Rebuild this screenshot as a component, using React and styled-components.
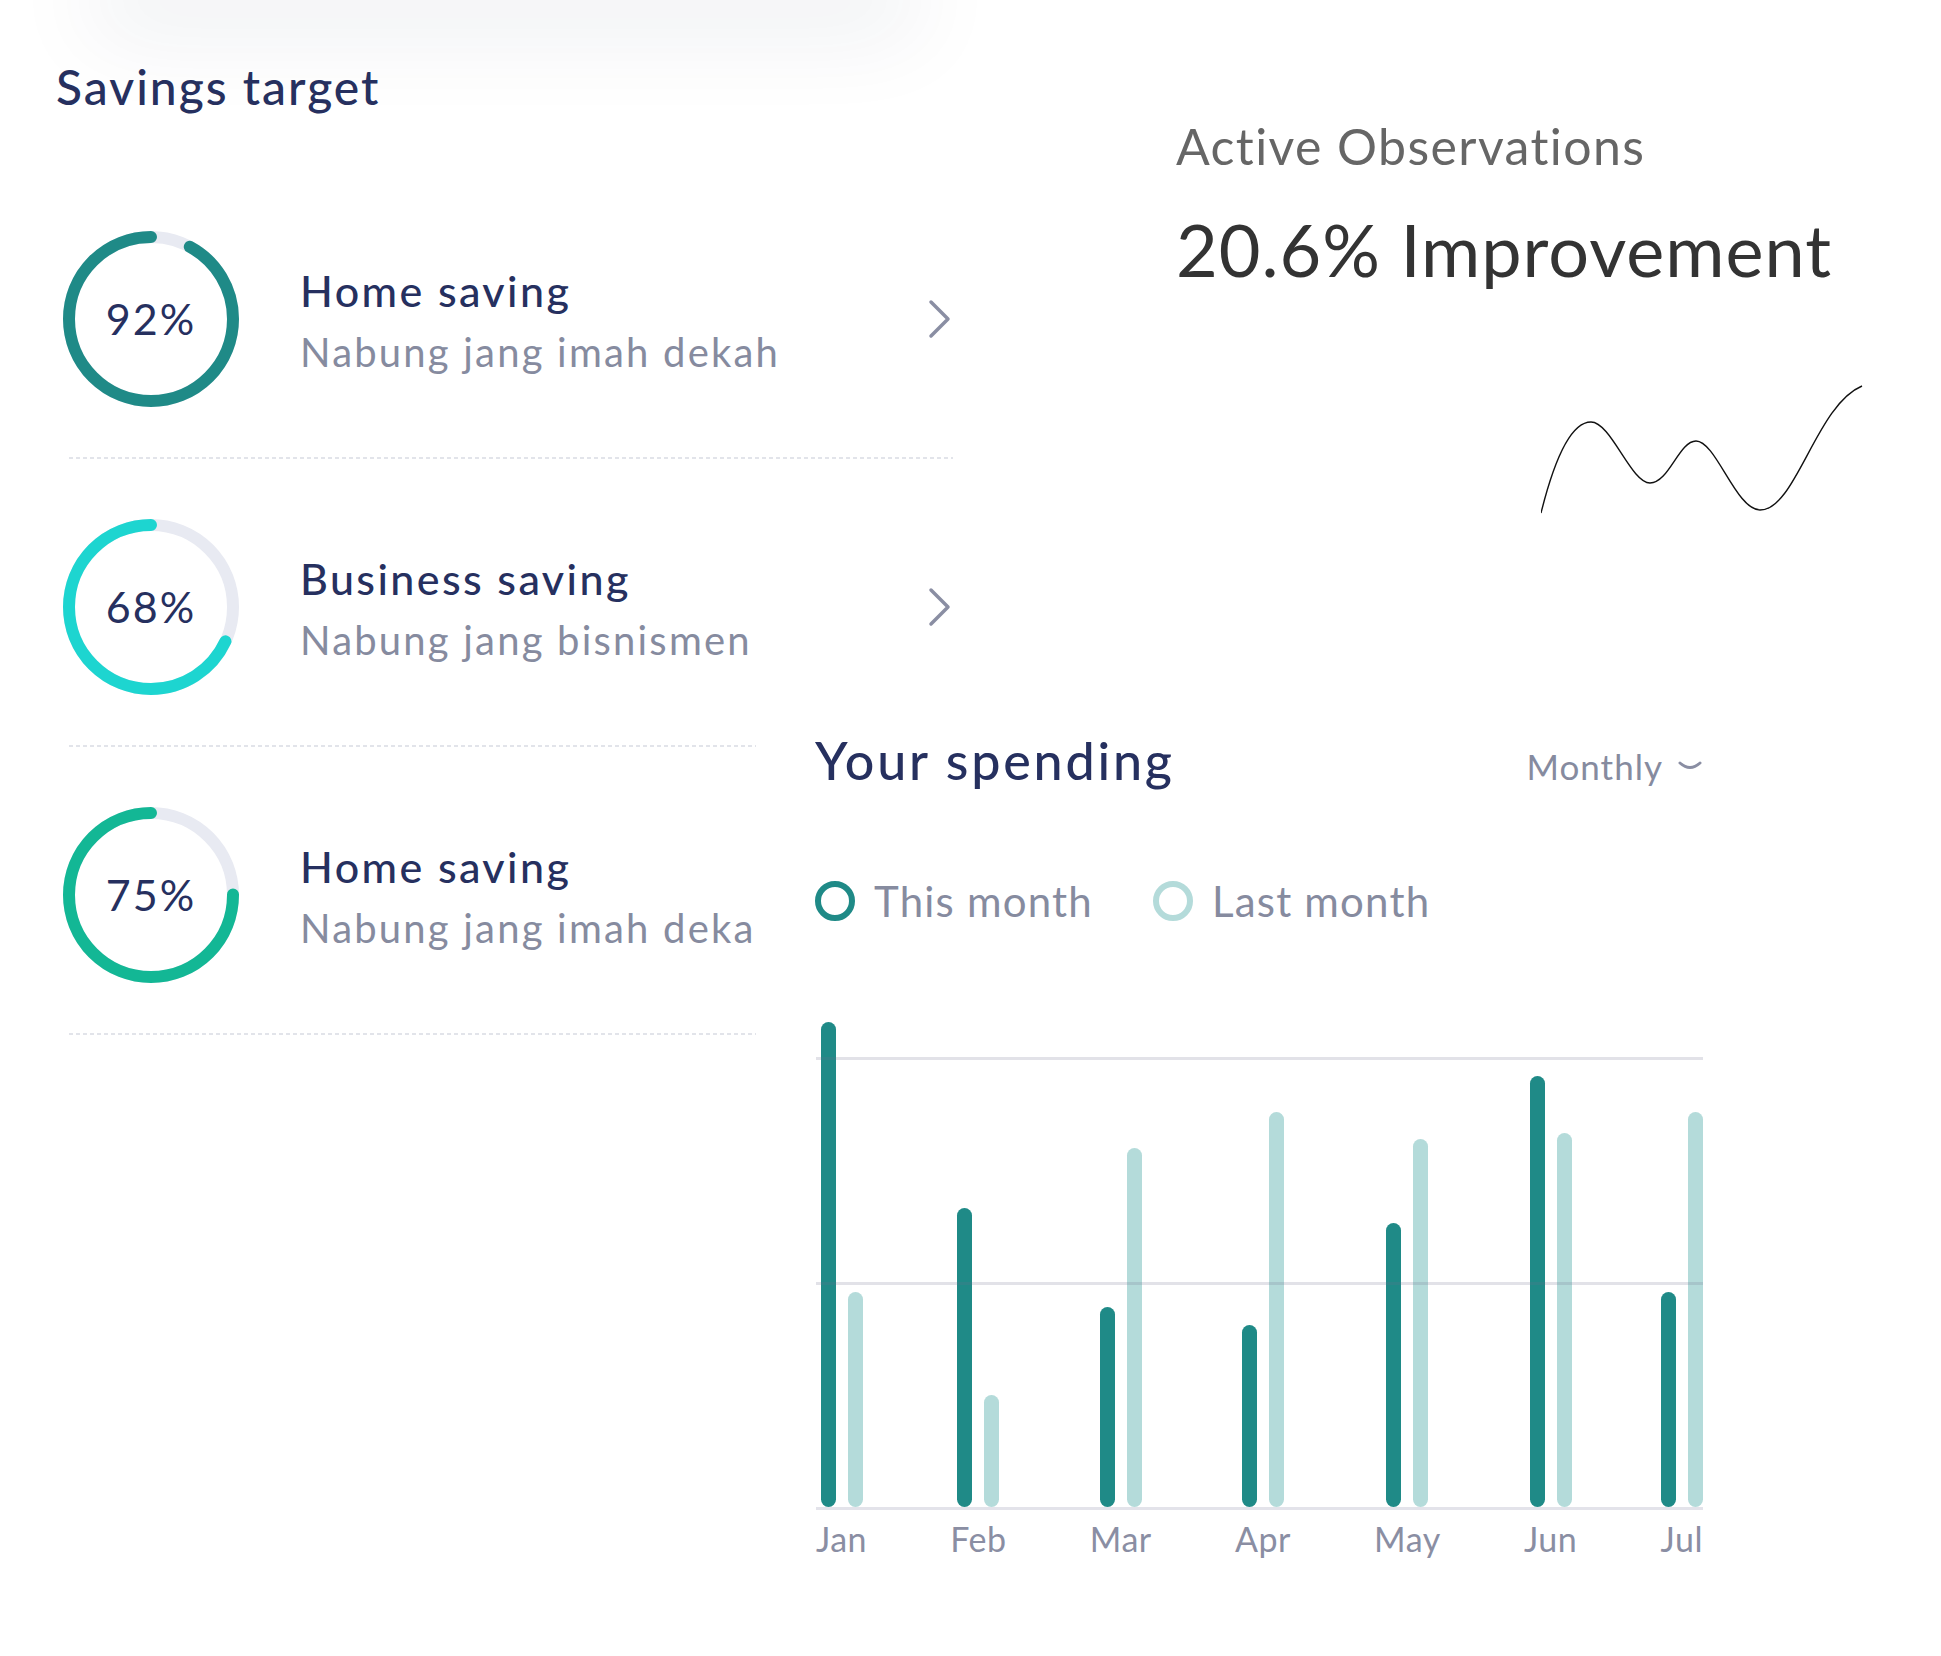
import React from "react";
import styled, { createGlobalStyle } from "styled-components";

const GlobalStyle = createGlobalStyle`
  html, body {
    margin: 0;
    padding: 0;
    background: #ffffff;
  }
  body {
    font-family: Lato, "Noto Sans", sans-serif;
    overflow: hidden;
  }
`;

const targets = [
  { pct: 92, color: "#1f8a87", title: "Home saving", sub: "Nabung jang imah dekah" },
  { pct: 68, color: "#1dd5d0", title: "Business saving", sub: "Nabung jang bisnismen" },
  { pct: 75, color: "#13b795", title: "Home saving", sub: "Nabung jang imah deka" },
];

const months = [
  { name: "Jan", cur: 485, last: 215 },
  { name: "Feb", cur: 299, last: 112 },
  { name: "Mar", cur: 200, last: 359 },
  { name: "Apr", cur: 182, last: 395 },
  { name: "May", cur: 284, last: 368 },
  { name: "Jun", cur: 431, last: 374 },
  { name: "Jul", cur: 215, last: 395 },
];

function Ring({ pct, color }) {
  const r = 82;
  const c = 2 * Math.PI * r;
  return (
    <RingBox>
      <svg width="180" height="180" viewBox="0 0 180 180">
        <circle cx="90" cy="90" r={r} fill="none" stroke="#e8eaf2" strokeWidth="12" />
        <circle
          cx="90"
          cy="90"
          r={r}
          fill="none"
          stroke={color}
          strokeWidth="12"
          strokeLinecap="round"
          strokeDasharray={`${(pct / 100) * c} ${c}`}
          transform="translate(180 0) scale(-1 1) rotate(-90 90 90)"
        />
      </svg>
      <RingLabel>{pct}%</RingLabel>
    </RingBox>
  );
}

function ChevronRight() {
  return (
    <svg width="26" height="40" viewBox="0 0 26 40">
      <polyline
        points="4,3 21,20 4,37"
        fill="none"
        stroke="#8a8ea3"
        strokeWidth="3.5"
        strokeLinecap="round"
        strokeLinejoin="round"
      />
    </svg>
  );
}

function App() {
  return (
    <Page>
      <GlobalStyle />
      <TopShade />
      <Layout>
        <SavingsColumn>
          <SectionTitle>Savings target</SectionTitle>
          <TargetList>
            {targets.map((t, i) => (
              <TargetItem key={i}>
                <ItemBody>
                  <Ring pct={t.pct} color={t.color} />
                  <ItemText>
                    <ItemTitle>{t.title}</ItemTitle>
                    <ItemSub>{t.sub}</ItemSub>
                  </ItemText>
                  <ChevronRight />
                </ItemBody>
                <Divider />
              </TargetItem>
            ))}
          </TargetList>
        </SavingsColumn>

        <Observations>
          <ObsLabel>Active Observations</ObsLabel>
          <ObsValue>20.6% Improvement</ObsValue>
          <Wave width="322" height="130" viewBox="0 0 322 130">
            <path
              d="M0,128 C12,80 28,37 50,37 C70,37 90,98 109,98 C128,98 138,56 155,56 C175,56 195,125 219,125 C255,125 275,20 321,1"
              fill="none"
              stroke="#111"
              strokeWidth="1.4"
            />
          </Wave>
        </Observations>

        <SpendingCard>
          <CardHeader>
            <CardTitle>Your spending</CardTitle>
            <PeriodPicker>
              Monthly
              <svg width="26" height="12" viewBox="0 0 26 12">
                <path d="M3 3 Q13 12 23 3" fill="none" stroke="#8a8ea3" strokeWidth="3" strokeLinecap="round" />
              </svg>
            </PeriodPicker>
          </CardHeader>

          <Legend>
            <LegendItem>
              <LegendDot $color="#1f8a87" />
              This month
            </LegendItem>
            <LegendItem>
              <LegendDot $color="#b4dbda" />
              Last month
            </LegendItem>
          </Legend>

          <Chart>
            <Columns>
              {months.map((m) => (
                <MonthCol key={m.name}>
                  <BarPair>
                    <Bar $color="#1f8a87" style={{ height: m.cur }} />
                    <Bar $color="#b4dbda" style={{ height: m.last }} />
                  </BarPair>
                  <MonthLabel>{m.name}</MonthLabel>
                </MonthCol>
              ))}
            </Columns>
            <GridLines>
              <GridLine />
              <GridLine />
              <GridLine $base />
            </GridLines>
          </Chart>
        </SpendingCard>
      </Layout>
    </Page>
  );
}

const Page = styled.div`
  width: 1941px;
  height: 1656px;
  background: #ffffff;
  overflow: hidden;
`;

const TopShade = styled.div`
  height: 0;
  width: 760px;
  margin-left: 125px;
  box-shadow: 0 0 90px 32px rgba(30, 40, 80, 0.08);
`;

const Layout = styled.div`
  display: grid;
  grid-template-columns: 756px 420px 1fr;
  grid-template-rows: 700px auto;
`;

const SavingsColumn = styled.section`
  grid-column: 1;
  grid-row: 1 / span 2;
  padding: 58px 0 0 56px;
`;

const SectionTitle = styled.h2`
  margin: 0;
  font-size: 48px;
  line-height: 1.2;
  font-weight: 500;
  letter-spacing: 2px;
  color: #26305f;
`;

const TargetList = styled.div`
  width: 892px;
  margin: 55px 0 0 5px;
`;

const TargetItem = styled.div`
  padding-top: 58px;
`;

const ItemBody = styled.div`
  display: flex;
  align-items: center;
  padding-bottom: 48px;
`;

const RingBox = styled.div`
  display: grid;
  place-items: center;
  width: 180px;
  height: 180px;
  flex: none;

  > * {
    grid-area: 1 / 1;
  }
`;

const RingLabel = styled.span`
  font-size: 43px;
  font-weight: 400;
  letter-spacing: 2px;
  color: #26305f;
`;

const ItemText = styled.div`
  flex: 1;
  display: flex;
  flex-direction: column;
  gap: 9px;
  margin-left: 59px;
  padding-top: 5px;
`;

const ItemTitle = styled.div`
  font-size: 43px;
  line-height: 52px;
  font-weight: 500;
  letter-spacing: 2.4px;
  color: #26305f;
`;

const ItemSub = styled.div`
  font-size: 40px;
  line-height: 52px;
  letter-spacing: 2.2px;
  color: #868b9f;
  white-space: nowrap;
`;

const Divider = styled.div`
  height: 2px;
  margin-left: 8px;
  background: repeating-linear-gradient(90deg, #e2e4ea 0 4px, transparent 4px 7px);
`;

const Observations = styled.section`
  grid-column: 3;
  grid-row: 1;
  padding-top: 116px;
  display: flex;
  flex-direction: column;
  align-items: flex-start;
`;

const ObsLabel = styled.div`
  font-size: 50px;
  line-height: 60px;
  letter-spacing: 1.4px;
  color: #666666;
`;

const ObsValue = styled.div`
  margin-top: 30px;
  font-size: 72px;
  line-height: 86px;
  letter-spacing: 1px;
  color: #333333;
`;

const Wave = styled.svg`
  margin: 93px 0 0 365px;
`;

const SpendingCard = styled.section`
  grid-column: 2 / span 2;
  grid-row: 2;
  position: relative;
  z-index: 1;
  width: 888px;
  background: #ffffff;
  padding: 29px 0 60px 59px;
`;

const CardHeader = styled.div`
  display: flex;
  justify-content: space-between;
  align-items: baseline;
`;

const CardTitle = styled.h2`
  margin: 0;
  font-size: 52px;
  line-height: 1.2;
  font-weight: 500;
  letter-spacing: 2.8px;
  color: #26305f;
`;

const PeriodPicker = styled.div`
  display: flex;
  align-items: center;
  gap: 14px;
  font-size: 35px;
  letter-spacing: 1px;
  color: #868b9f;
`;

const Legend = styled.div`
  display: flex;
  gap: 60px;
  margin-top: 85px;
`;

const LegendItem = styled.div`
  display: flex;
  align-items: center;
  gap: 19px;
  font-size: 42px;
  line-height: 50px;
  letter-spacing: 1.2px;
  color: #868b9f;
`;

const LegendDot = styled.span`
  width: 40px;
  height: 40px;
  box-sizing: border-box;
  border-radius: 50%;
  border: 6px solid ${(p) => p.$color};
`;

const Chart = styled.div`
  position: relative;
  width: 887px;
  margin: 73px 0 0 1px;
`;

const Columns = styled.div`
  display: flex;
  justify-content: space-between;
`;

const MonthCol = styled.div`
  display: flex;
  flex-direction: column;
  align-items: center;
`;

const BarPair = styled.div`
  display: flex;
  align-items: flex-end;
  gap: 12px;
  height: 508px;
`;

const Bar = styled.div`
  width: 15px;
  border-radius: 8px;
  background: ${(p) => p.$color};
`;

const MonthLabel = styled.div`
  margin-top: 11px;
  font-size: 34px;
  line-height: 41px;
  letter-spacing: 0.5px;
  color: #8a8ea3;
`;

const GridLines = styled.div`
  position: absolute;
  top: 58px;
  left: 0;
  right: 0;
  height: 453px;
  display: flex;
  flex-direction: column;
  justify-content: space-between;
  pointer-events: none;
`;

const GridLine = styled.div`
  height: 3px;
  background: ${(p) => (p.$base ? "#e3e3ea" : "rgba(110, 110, 140, 0.2)")};
`;

export default App;
